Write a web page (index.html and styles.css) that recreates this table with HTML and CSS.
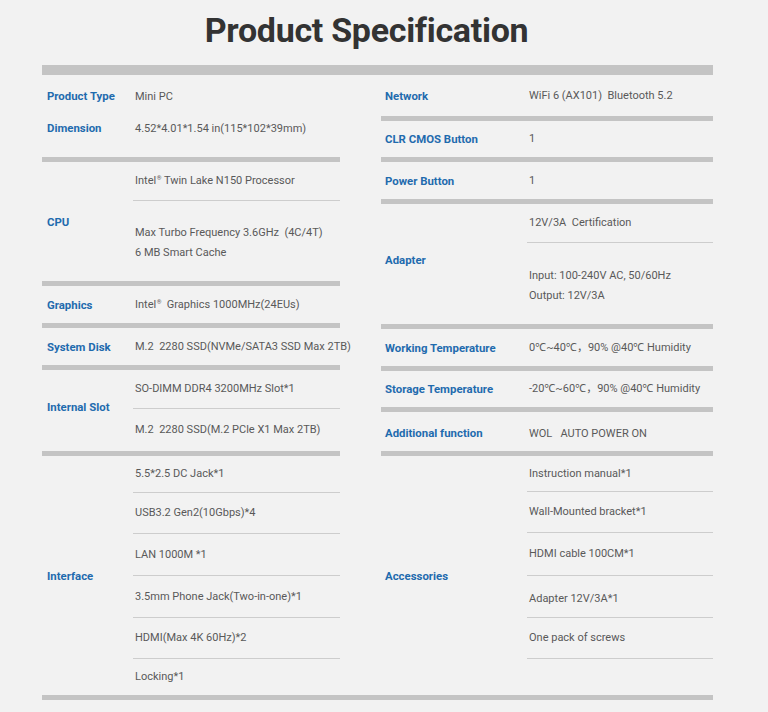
FILE: index.html
```html
<!DOCTYPE html>
<html lang="en">
<head>
<meta charset="utf-8">
<title>Product Specification</title>
<link rel="stylesheet" href="styles.css">
</head>
<body>
<main class="page">
  <h1 class="title">Product Specification</h1>
  <div class="spec">
    <div class="bar-top"></div>
    <div class="cols">
      <div class="col col-left">
        <section class="sec sec-pairs">
          <div class="pair"><span class="label">Product Type</span><span class="val">Mini PC</span></div>
          <div class="pair"><span class="label">Dimension</span><span class="val">4.52*4.01*1.54 in(115*102*39mm)</span></div>
        </section>
        <div class="bar"></div>
        <section class="sec">
          <div class="label">CPU</div>
          <div class="vals">
            <div class="v h38"><span>Intel<sup class="reg">®</sup> Twin Lake N150 Processor</span></div>
            <div class="v h80 v-low"><p>Max Turbo Frequency 3.6GHz&nbsp; (4C/4T)<br>6 MB Smart Cache</p></div>
          </div>
        </section>
        <div class="bar"></div>
        <section class="sec h37">
          <div class="label">Graphics</div>
          <div class="vals"><div class="v grow"><span>Intel<sup class="reg">®</sup>&nbsp; Graphics 1000MHz(24EUs)</span></div></div>
        </section>
        <div class="bar"></div>
        <section class="sec h37">
          <div class="label">System Disk</div>
          <div class="vals"><div class="v grow">M.2&nbsp; 2280 SSD(NVMe/SATA3 SSD Max 2TB)</div></div>
        </section>
        <div class="bar"></div>
        <section class="sec">
          <div class="label label-up">Internal Slot</div>
          <div class="vals">
            <div class="v h38">SO-DIMM DDR4 3200MHz Slot*1</div>
            <div class="v h42">M.2&nbsp; 2280 SSD(M.2 PCle X1 Max 2TB)</div>
          </div>
        </section>
        <div class="bar"></div>
        <section class="sec">
          <div class="label">Interface</div>
          <div class="vals">
            <div class="v h36">5.5*2.5 DC Jack*1</div>
            <div class="v h40">USB3.2 Gen2(10Gbps)*4</div>
            <div class="v h41">LAN 1000M *1</div>
            <div class="v h41">3.5mm Phone Jack(Two-in-one)*1</div>
            <div class="v h40">HDMI(Max 4K 60Hz)*2</div>
            <div class="v h36">Locking*1</div>
          </div>
        </section>
      </div>

      <div class="col col-right">
        <section class="sec h41">
          <div class="label">Network</div>
          <div class="vals"><div class="v grow">WiFi 6 (AX101)&nbsp; Bluetooth 5.2</div></div>
        </section>
        <div class="bar"></div>
        <section class="sec h36">
          <div class="label">CLR CMOS Button</div>
          <div class="vals"><div class="v grow">1</div></div>
        </section>
        <div class="bar"></div>
        <section class="sec h37">
          <div class="label">Power Button</div>
          <div class="vals"><div class="v grow">1</div></div>
        </section>
        <div class="bar"></div>
        <section class="sec">
          <div class="label label-up">Adapter</div>
          <div class="vals">
            <div class="v h38">12V/3A&nbsp; Certification</div>
            <div class="v h81 v-low"><p>Input: 100-240V AC, 50/60Hz<br>Output: 12V/3A</p></div>
          </div>
        </section>
        <div class="bar"></div>
        <section class="sec h37">
          <div class="label">Working Temperature</div>
          <div class="vals"><div class="v grow">0℃~40℃，90% @40℃ Humidity</div></div>
        </section>
        <div class="bar"></div>
        <section class="sec h36">
          <div class="label">Storage Temperature</div>
          <div class="vals"><div class="v grow">-20℃~60℃，90% @40℃ Humidity</div></div>
        </section>
        <div class="bar"></div>
        <section class="sec h39">
          <div class="label label-down">Additional function</div>
          <div class="vals"><div class="v grow v-down">WOL&nbsp;&nbsp; AUTO POWER ON</div></div>
        </section>
        <div class="bar"></div>
        <section class="sec sec-fill">
          <div class="label">Accessories</div>
          <div class="vals">
            <div class="v h35">Instruction manual*1</div>
            <div class="v h40">Wall-Mounted bracket*1</div>
            <div class="v h42">HDMI cable 100CM*1</div>
            <div class="v h41 v-down">Adapter 12V/3A*1</div>
            <div class="v h40">One pack of screws</div>
            <div class="v grow"></div>
          </div>
        </section>
      </div>
    </div>
    <div class="bar-bottom"></div>
  </div>
</main>
</body>
</html>
```

FILE: styles.css
```css
* {
  box-sizing: content-box;
}

body {
  margin: 0;
  background: #f2f2f2;
  font-family: Roboto, "Noto Sans", "Noto Sans CJK SC", sans-serif;
}

.page {
  width: 671px;
  margin-left: 42px;
}

.title {
  margin: 0;
  padding: 10px 22px 15px 0;
  height: 40px;
  line-height: 40px;
  font-size: 34px;
  font-weight: 700;
  letter-spacing: -0.3px;
  text-align: center;
  color: #333333;
}

.bar-top {
  height: 10px;
  background: #c4c4c4;
}

.bar-bottom {
  height: 5px;
  background: #c4c4c4;
}

.cols {
  display: flex;
  gap: 41px;
}

.col {
  display: flex;
  flex-direction: column;
}

.col-left {
  width: 298px;
}

.col-right {
  width: 332px;
}

.bar {
  flex: none;
  height: 5px;
  background: #c4c4c4;
}

.sec {
  display: flex;
  align-items: center;
}

.sec-fill {
  flex: 1;
}

.sec-pairs {
  flex-direction: column;
  align-items: stretch;
  padding: 5px 0 13px;
}

.pair {
  display: flex;
  align-items: center;
  height: 32px;
}

.label {
  flex: none;
  color: #1f6bae;
  font-size: 11.4px;
  font-weight: 700;
  line-height: 16px;
}

.col-left .label {
  width: 86px;
  padding-left: 5px;
}

.col-right .label {
  width: 142px;
  padding-left: 4px;
}

.label-up {
  margin-top: -8px;
}

.label-down {
  margin-top: 3px;
}

.val {
  padding-left: 2px;
  font-size: 11px;
  color: #595959;
}

.vals {
  flex: 1;
  align-self: stretch;
  display: flex;
  flex-direction: column;
}

.v {
  display: flex;
  align-items: center;
  padding-left: 2px;
  font-size: 11px;
  line-height: 20px;
  color: #595959;
  white-space: nowrap;
}

.v:not(:last-child) {
  border-bottom: 1px solid #cdcdcd;
}

.v p {
  margin: 0;
}

.v-down {
  padding-top: 5px;
}

.v-low {
  padding-top: 4px;
}

.grow {
  flex: 1;
}

.reg {
  font-size: 6px;
  line-height: 0;
  vertical-align: 4px;
  margin-left: 0.5px;
}

.h35 { height: 35px; }
.h36 { height: 36px; }
.h37 { height: 37px; }
.h38 { height: 38px; }
.h39 { height: 39px; }
.h40 { height: 40px; }
.h41 { height: 41px; }
.h42 { height: 42px; }
.h80 { height: 76px; }
.h81 { height: 77px; }
.v-down.h41 { height: 36px; }
```
